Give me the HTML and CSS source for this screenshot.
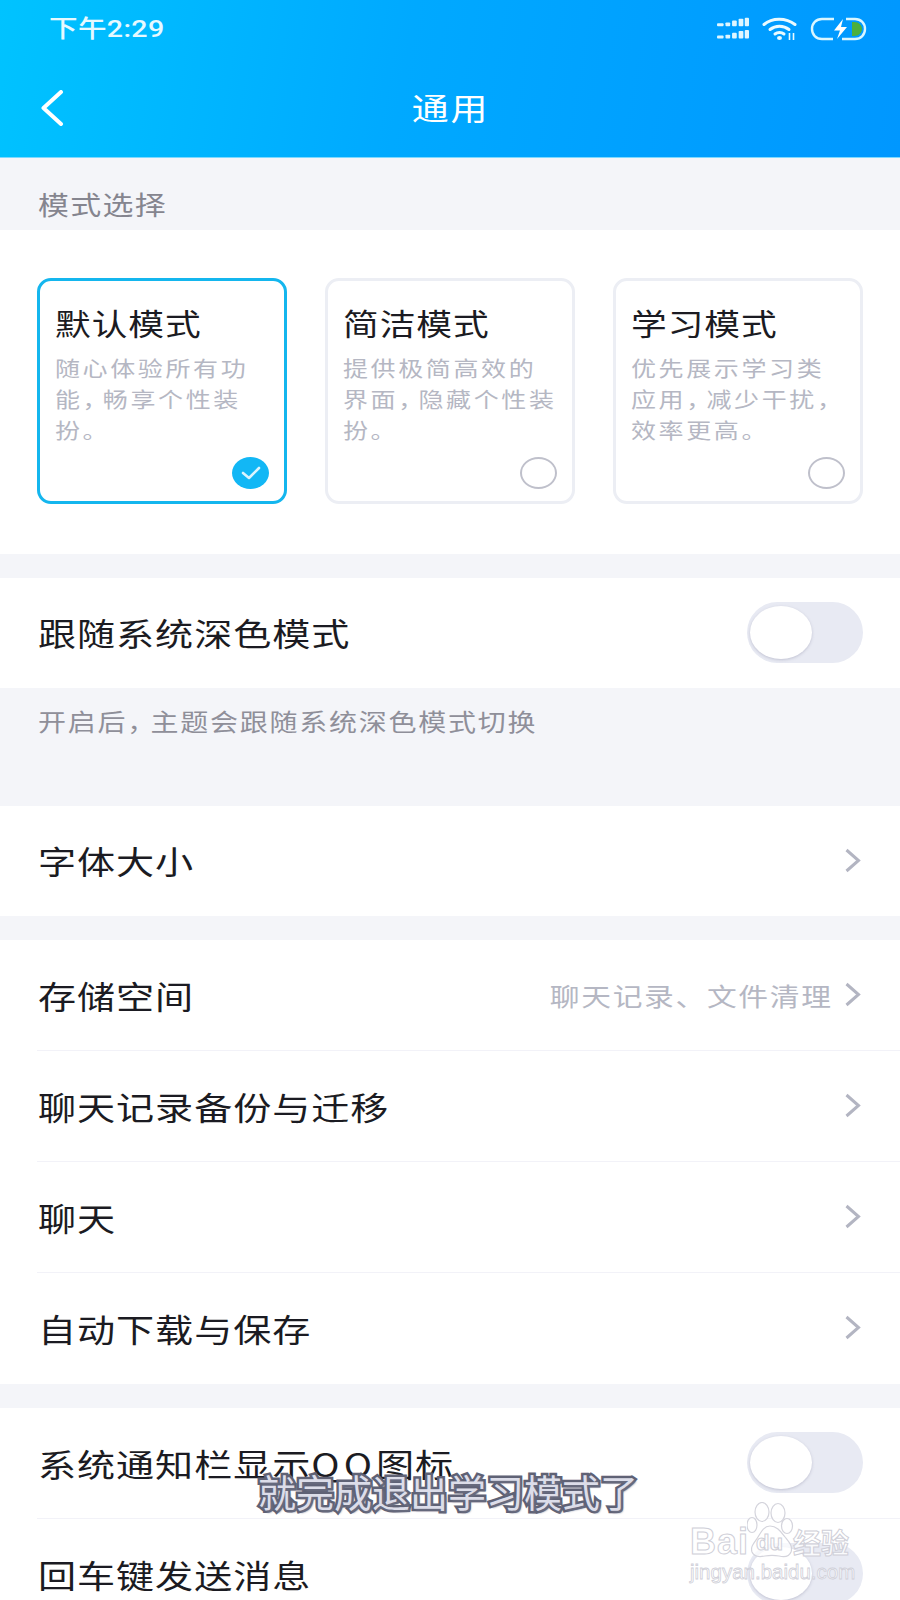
FILE: index.html
```html
<!DOCTYPE html>
<html lang="zh-CN">
  <head>
    <meta charset="UTF-8" />
    <title>通用</title>
    <link rel="stylesheet" href="styles.css">
  </head>
  <body>
    <div id="page">
      <header class="top">
        <div class="status">
          <span class="time wide">下午2:29</span>
          <div class="status-icons">
            <svg class="sig" width="32" height="24" viewBox="0 0 34 24">
              <g fill="#dff6ff">
                <rect x="0" y="6" width="7" height="3" rx="1"/><rect x="9" y="5" width="5" height="4" rx="1"/><rect x="16" y="3" width="5" height="6" rx="1"/><rect x="23" y="1" width="5" height="8" rx="1"/><rect x="29.500" y="0" width="4.500" height="9" rx="1"/>
                <rect x="0" y="19" width="7" height="3" rx="1"/><rect x="9" y="18" width="5" height="4" rx="1"/><rect x="16" y="16" width="5" height="6" rx="1"/><rect x="23" y="14" width="5" height="8" rx="1"/><rect x="29.500" y="13" width="4.500" height="9" rx="1"/>
              </g>
            </svg>
            <svg class="wifi" width="36" height="24" viewBox="0 0 36 24">
              <g fill="none" stroke="#eafaff" stroke-width="3" stroke-linecap="round">
                <path d="M2 7.500C10 0.500 24 0.500 33 7.500"/>
                <path d="M8 12.500C13.500 8 21.500 8 27 12.500"/>
                <path d="M13 17C15.500 15 19.500 15 22 17"/>
              </g>
              <ellipse cx="17.500" cy="21" rx="2.500" ry="2" fill="#eafaff"/>
              <path d="M27.500 16v7M31.500 16v7" stroke="#eafaff" stroke-width="1.600"/>
            </svg>
            <svg class="batt" width="57" height="24" viewBox="0 0 57 24">
              <path d="M24 2H12C6 2 2 6.500 2 12s4 10 10 10h11M36 2h9c6 0 10 4.500 10 10s-4 10-10 10H32" fill="none" stroke="#d9f6ff" stroke-width="2.400"/>
              <path d="M33 2L24 13.500h6L27 22l10-12h-6l2-8z" fill="#fff"/>
              <path d="M42 5h2c5 0 8 3.500 8 7s-3 7-8 7h-2z" fill="#4caf3c"/>
            </svg>
          </div>
        </div>
        <div class="nav">
          <svg class="back" width="24" height="36" viewBox="0 0 24 36">
            <path d="M21 2L3.500 18 21 34" fill="none" stroke="#fff" stroke-width="4" stroke-linecap="round" stroke-linejoin="round"/>
          </svg>
          <div class="nav-title wide">通用</div>
        </div>
      </header>

      <div class="label"><span class="wide">模式选择</span></div>

      <section class="modes">
        <div class="card on">
          <div class="card-title wide">默认模式</div>
          <div class="card-desc wide">随心体验所有功<br>能<span class="c">，</span>畅享个性装<br>扮。</div>
          <span class="pick yes">
            <svg width="22" height="16" viewBox="0 0 22 16"><path d="M3 8l6 5 10-10" fill="none" stroke="#fff" stroke-width="2.600" stroke-linecap="round" stroke-linejoin="round" opacity=".85"/></svg>
          </span>
        </div>
        <div class="card">
          <div class="card-title wide">简洁模式</div>
          <div class="card-desc wide">提供极简高效的<br>界面<span class="c">，</span>隐藏个性装<br>扮。</div>
          <span class="pick"></span>
        </div>
        <div class="card">
          <div class="card-title wide">学习模式</div>
          <div class="card-desc wide">优先展示学习类<br>应用<span class="c">，</span>减少干扰，<br>效率更高。</div>
          <span class="pick"></span>
        </div>
      </section>

      <section class="group gap">
        <div class="row">
          <span class="row-title wide">跟随系统深色模式</span>
          <span class="switch"><i></i></span>
        </div>
      </section>
      <div class="note"><span class="wide">开启后<span class="c">，</span>主题会跟随系统深色模式切换</span></div>

      <section class="group">
        <div class="row">
          <span class="row-title wide">字体大小</span>
          <svg class="more" width="17" height="25" viewBox="0 0 17 25"><path d="M2.500 2L14.500 12.500 2.500 23" fill="none" stroke="#b3b5c2" stroke-width="3"/></svg>
        </div>
      </section>

      <section class="group gap tall">
        <div class="row line">
          <span class="row-title wide">存储空间</span>
          <span class="row-value wide">聊天记录、文件清理</span>
          <svg class="more" width="17" height="25" viewBox="0 0 17 25"><path d="M2.500 2L14.500 12.500 2.500 23" fill="none" stroke="#b3b5c2" stroke-width="3"/></svg>
        </div>
        <div class="row line">
          <span class="row-title wide">聊天记录备份与迁移</span>
          <svg class="more" width="17" height="25" viewBox="0 0 17 25"><path d="M2.500 2L14.500 12.500 2.500 23" fill="none" stroke="#b3b5c2" stroke-width="3"/></svg>
        </div>
        <div class="row line">
          <span class="row-title wide">聊天</span>
          <svg class="more" width="17" height="25" viewBox="0 0 17 25"><path d="M2.500 2L14.500 12.500 2.500 23" fill="none" stroke="#b3b5c2" stroke-width="3"/></svg>
        </div>
        <div class="row">
          <span class="row-title wide">自动下载与保存</span>
          <svg class="more" width="17" height="25" viewBox="0 0 17 25"><path d="M2.500 2L14.500 12.500 2.500 23" fill="none" stroke="#b3b5c2" stroke-width="3"/></svg>
        </div>
      </section>

      <section class="group gap tall">
        <div class="row line">
          <span class="row-title wide">系统通知栏显示<span class="qq">QQ</span>图标</span>
          <span class="switch"><i></i></span>
        </div>
        <div class="row">
          <span class="row-title wide">回车键发送消息</span>
          <span class="switch"><i></i></span>
        </div>
      </section>

      <!-- 视频字幕和水印 -->
      <div class="subtitle">就完成退出学习模式了</div>
      <div class="mark">
        <svg class="paw" width="56" height="68" viewBox="0 0 56 68">
          <g fill="rgba(255,255,255,.7)" stroke="#d4d4dc" stroke-width="1.200">
            <ellipse cx="15" cy="10" rx="7" ry="9.500"/>
            <ellipse cx="31" cy="11" rx="7" ry="9.500"/>
            <ellipse cx="5" cy="23" rx="5" ry="7.500"/>
            <ellipse cx="40" cy="24" rx="5.500" ry="7.500"/>
            <path d="M23 24c7 0 11 6 15 11 4 5 8 9 6 15-2 5-8 5-12 4-5-1-9-1-14 0-5 1-11 1-13-4-2-6 3-10 6-15 3-5 6-11 12-11z"/>
          </g>
        </svg>
        <div class="mark-top">
          <span class="mark-bai">Bai</span>
          <span class="mark-du">du</span>
          <span class="mark-cn">经验</span>
        </div>
        <div class="mark-url">jingyan.baidu.com</div>
      </div>
    </div>
  </body>
</html>
```

FILE: styles.css
```css
:root {
  --bg: #f4f5f9;
  --ink: #1b1b22;
  --muted: #b5b7c3;
  --blue: #14b6ee;
  --font: "Noto Sans CJK SC", "Noto Sans", sans-serif;
}
html,
body {
  margin: 0;
  padding: 0;
}
body {
  background: var(--bg);
  font-family: var(--font);
  overflow: hidden;
}
#page {
  position: relative;
  width: 900px;
  height: 1600px;
  overflow: hidden;
}
/* the capture is stretched sideways, so the text is too */
.wide {
  display: block;
  white-space: nowrap;
  transform: scaleX(1.19);
  transform-origin: left center;
}
/* comma sits tighter than the full-width glyph */
.c {
  letter-spacing: -4px;
}
.top {
  height: 158px;
  box-sizing: border-box;
  border-bottom: 1px solid #7ed9ff;
  background: linear-gradient(100deg, #00c3ff 0%, #00a9ff 45%, #0097ff 100%);
  color: #fff;
}
.status {
  height: 58px;
  padding: 0 33px 0 49px;
  display: flex;
  align-items: center;
  justify-content: space-between;
}
.time {
  font-family: Roboto, var(--font);
  font-size: 24px;
  line-height: 30px;
  margin-top: -1px;
  color: #e6f9ff;
  font-weight: 500;
  letter-spacing: 0.3px;
}
.status-icons {
  display: flex;
  align-items: center;
  gap: 13px;
}
.wifi {
  margin-right: -1px;
}
.nav {
  position: relative;
  height: 98px;
  display: flex;
  align-items: center;
  justify-content: center;
}
.back {
  position: absolute;
  left: 40px;
  top: 32px;
}
.nav-title {
  font-size: 31px;
  line-height: 40px;
  letter-spacing: 1.5px;
  transform-origin: center;
}
.label {
  height: 72px;
  box-sizing: border-box;
  padding: 29px 0 0 38px;
  font-size: 26px;
  line-height: 34px;
  letter-spacing: 1.1px;
  color: #85858f;
}
.modes {
  height: 324px;
  box-sizing: border-box;
  padding: 48px 38px 0 37px;
  background: #fff;
  display: grid;
  grid-template-columns: repeat(3, 250px);
  column-gap: 38px;
  align-content: start;
}
.card {
  position: relative;
  height: 226px;
  box-sizing: border-box;
  padding: 21px 0 0 15px;
  border: 3px solid #eceef4;
  border-radius: 14px;
}
.card.on {
  border-color: var(--blue);
}
.card-title {
  font-size: 30px;
  line-height: 40px;
  letter-spacing: 0.8px;
  color: var(--ink);
}
.card-desc {
  margin-top: 10px;
  font-size: 21px;
  line-height: 31px;
  letter-spacing: 2.2px;
  color: var(--muted);
}
.pick {
  position: absolute;
  right: 15px;
  bottom: 12px;
  width: 37px;
  height: 32px;
  box-sizing: border-box;
  border: 2px solid #bfc0cb;
  border-radius: 50%;
  display: flex;
  align-items: center;
  justify-content: center;
}
.pick.yes {
  border: none;
  background: #12b7f5;
}
.group {
  background: #fff;
}
.group.gap {
  margin-top: 24px;
}
.row {
  position: relative;
  height: 110px;
  padding: 0 39px 2px 38px;
  display: flex;
  align-items: center;
  justify-content: space-between;
  box-sizing: border-box;
}
.tall .row {
  height: 111px;
}
.row.line::after {
  content: "";
  position: absolute;
  left: 37px;
  right: 0;
  bottom: 0;
  height: 1px;
  background: #f2f2f8;
}
.row-title {
  font-size: 32px;
  line-height: 44px;
  letter-spacing: 0.8px;
  color: var(--ink);
}
.qq {
  letter-spacing: 3.5px;
}
.row-value {
  margin-left: auto;
  margin-right: 11px;
  font-size: 25px;
  line-height: 34px;
  letter-spacing: 1.4px;
  color: var(--muted);
  transform-origin: right center;
}
.more {
  flex: none;
}
.switch {
  position: relative;
  flex: none;
  width: 116px;
  height: 61px;
  margin-right: -2px;
  border-radius: 31px;
  background: #e8eaf3;
}
.switch i {
  position: absolute;
  left: 3px;
  top: 4px;
  width: 62px;
  height: 53px;
  border-radius: 50%;
  background: #fff;
  box-shadow: 0 1px 3px rgba(120, 120, 150, 0.35);
}
.note {
  height: 118px;
  box-sizing: border-box;
  padding: 16px 0 0 38px;
  font-size: 23.5px;
  line-height: 34px;
  letter-spacing: 1.5px;
  color: #8f8f99;
}
.subtitle {
  position: absolute;
  left: 258px;
  top: 1465px;
  font-size: 38px;
  line-height: 52px;
  white-space: nowrap;
  color: #dcdde9;
  -webkit-text-stroke: 5px #5f6275;
  paint-order: stroke fill;
  text-shadow: 2px 2px 2px #6a6d80;
}
.mark {
  position: absolute;
  left: 690px;
  top: 1502px;
  width: 170px;
  height: 84px;
}
.paw {
  position: absolute;
  left: 57px;
  top: 0;
}
.mark-top {
  position: absolute;
  left: 0;
  top: 20px;
  width: 170px;
  height: 40px;
  color: rgba(255, 255, 255, 0.8);
  -webkit-text-stroke: 1px #cfcfd8;
}
.mark-bai {
  position: absolute;
  left: 0;
  top: 0;
  font: 700 36px/40px "Liberation Sans", sans-serif;
  letter-spacing: 1px;
}
.mark-du {
  position: absolute;
  left: 66px;
  top: 8px;
  font: 700 22px/26px "Liberation Sans", sans-serif;
}
.mark-cn {
  position: absolute;
  left: 103px;
  top: 0;
  font-size: 28px;
  line-height: 40px;
  font-weight: 700;
}
.mark-url {
  position: absolute;
  left: 0;
  top: 58px;
  font: 20.5px/24px "Liberation Sans", sans-serif;
  white-space: nowrap;
  color: rgba(255, 255, 255, 0.8);
  -webkit-text-stroke: 0.8px #cfcfd8;
}
```
